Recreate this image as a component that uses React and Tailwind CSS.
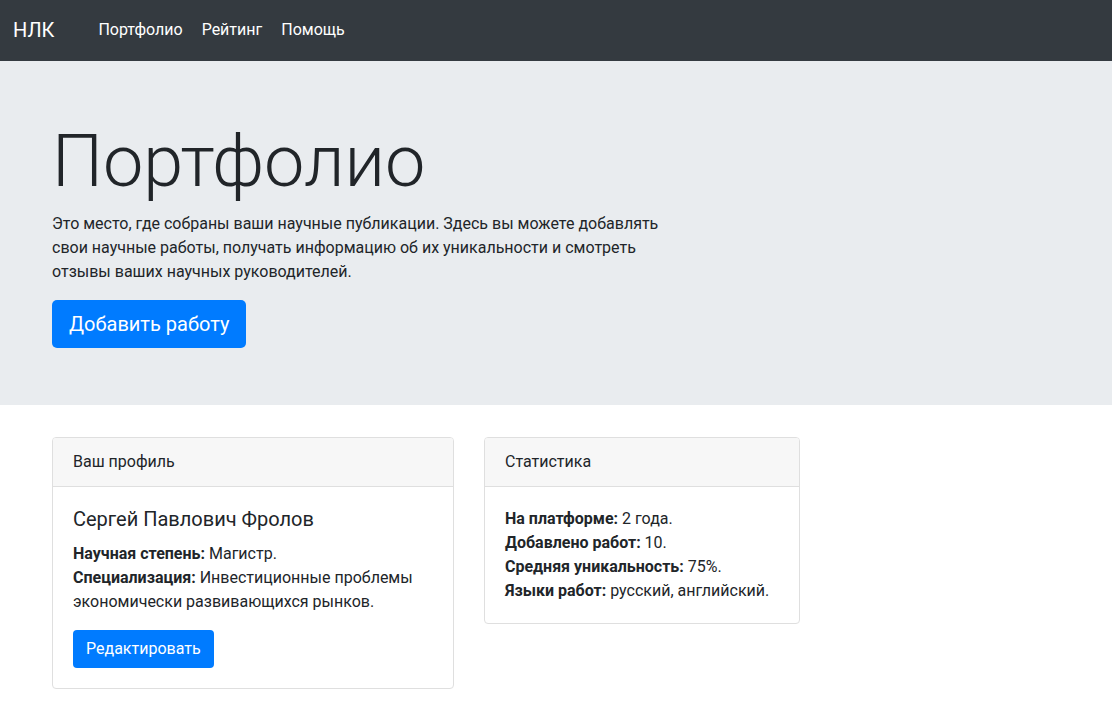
export default function App() {
  return (
    <div className="min-h-[710px] bg-white text-[#212529] text-[16px] leading-6" style={{ fontFamily: "Roboto, 'Liberation Sans', sans-serif" }}>
      <nav className="h-[61px] bg-[#343a40] flex items-center pl-[13px] pb-[1px]">
        <span className="text-white text-[20px] leading-[30px]">НЛК</span>
        <div className="flex items-center ml-[44px] gap-[19px] text-white">
          <span>Портфолио</span>
          <span>Рейтинг</span>
          <span>Помощь</span>
        </div>
      </nav>
      <section className="bg-[#e9ecef] pl-[52px] pt-[58px] pb-[57px]">
        <h1 className="text-[72px] font-light leading-[86px] mb-[7px]">Портфолио</h1>
        <p className="w-[624px] mb-4">
          Это место, где собраны ваши научные публикации. Здесь вы можете добавлять свои научные работы, получать информацию об их уникальности и смотреть отзывы ваших научных руководителей.
        </p>
        <button className="bg-[#007bff] text-white text-[20px] leading-[30px] px-[17px] py-[9px] rounded-[5px]">Добавить работу</button>
      </section>
      <div className="flex items-start gap-[30px] pl-[52px] pt-[32px] pb-5">
        <div className="w-[402px] border border-[#dfdfdf] rounded-[4px] overflow-hidden">
          <div className="bg-[#f7f7f7] border-b border-[#dfdfdf] px-5 py-3">Ваш профиль</div>
          <div className="p-5">
            <h5 className="text-[20px] leading-6 mb-[11px]">Сергей Павлович Фролов</h5>
            <p className="mb-4">
              <b className="font-bold">Научная степень:</b> Магистр.<br />
              <b className="font-bold">Специализация:</b> Инвестиционные проблемы экономически развивающихся рынков.
            </p>
            <button className="bg-[#007bff] text-white px-[13px] py-[7px] rounded-[4px]">Редактировать</button>
          </div>
        </div>
        <div className="w-[316px] border border-[#dfdfdf] rounded-[4px] overflow-hidden">
          <div className="bg-[#f7f7f7] border-b border-[#dfdfdf] px-5 py-3">Статистика</div>
          <div className="p-5">
            <p>
              <b className="font-bold">На платформе:</b> 2 года.<br />
              <b className="font-bold">Добавлено работ:</b> 10.<br />
              <b className="font-bold">Средняя уникальность:</b> 75%.<br />
              <b className="font-bold">Языки работ:</b> русский, английский.
            </p>
          </div>
        </div>
      </div>
    </div>
  );
}
